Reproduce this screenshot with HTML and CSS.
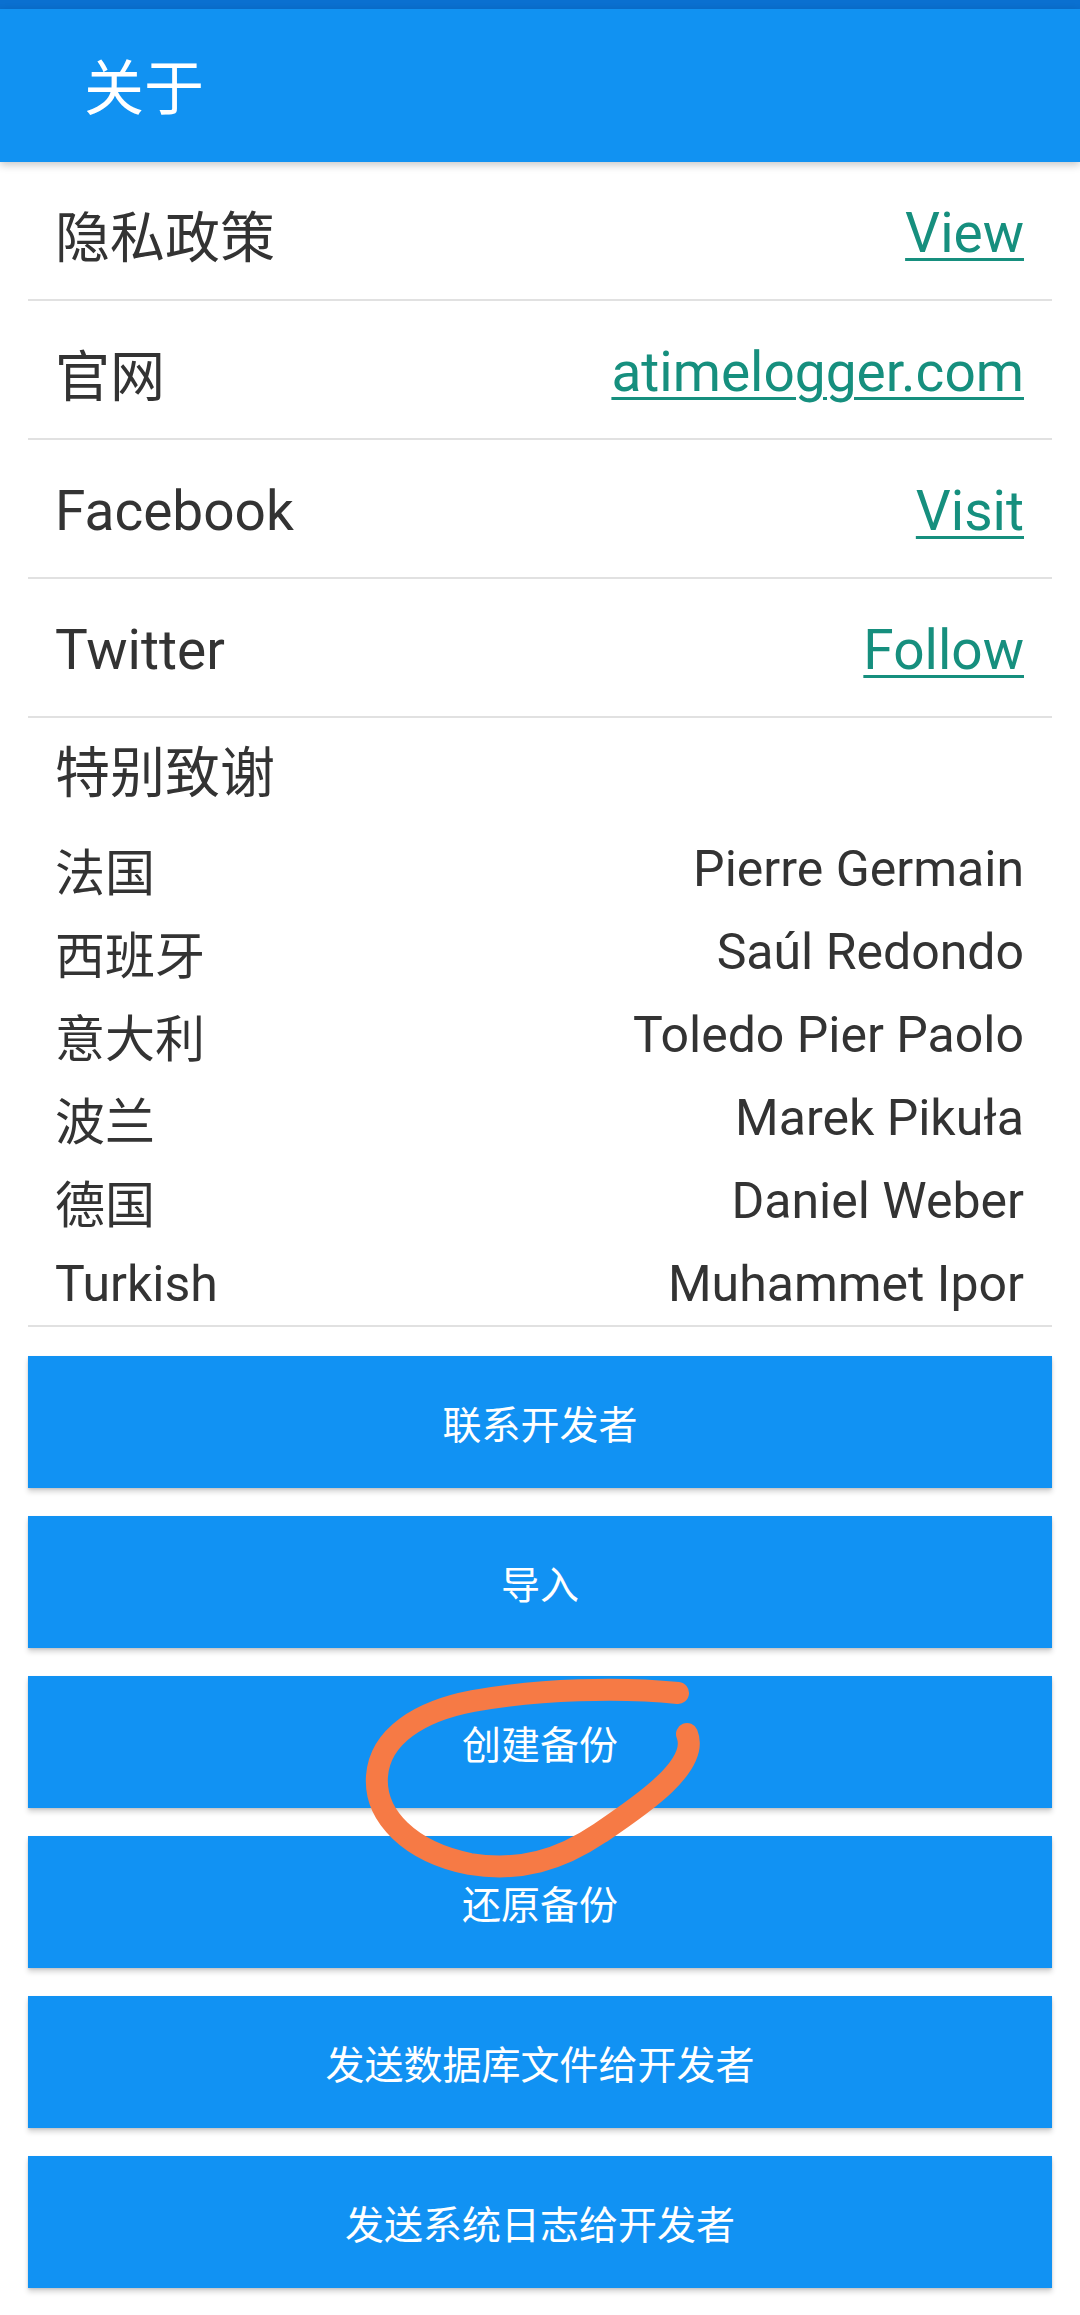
FILE: index.html
```html
<!DOCTYPE html>
<html lang="zh">
<head>
<meta charset="utf-8">
<title>关于</title>
<link rel="stylesheet" href="styles.css">
</head>
<body>
<div class="page">
  <div class="statusbar"></div>
  <header class="appbar"><h1 class="title">关于</h1></header>

  <main class="content">
    <div class="row">
      <span class="label">隐私政策</span>
      <a class="link">View</a>
    </div>
    <div class="row">
      <span class="label">官网</span>
      <a class="link">atimelogger.com</a>
    </div>
    <div class="row">
      <span class="label">Facebook</span>
      <a class="link">Visit</a>
    </div>
    <div class="row">
      <span class="label">Twitter</span>
      <a class="link">Follow</a>
    </div>

    <section class="thanks">
      <div class="thanks-title">特别致谢</div>
      <div class="thanks-list">
        <div class="thanks-row"><span>法国</span><span>Pierre Germain</span></div>
        <div class="thanks-row"><span>西班牙</span><span>Saúl Redondo</span></div>
        <div class="thanks-row"><span>意大利</span><span>Toledo Pier Paolo</span></div>
        <div class="thanks-row"><span>波兰</span><span>Marek Pikuła</span></div>
        <div class="thanks-row"><span>德国</span><span>Daniel Weber</span></div>
        <div class="thanks-row"><span>Turkish</span><span>Muhammet Ipor</span></div>
      </div>
    </section>

    <div class="buttons">
      <button class="btn">联系开发者</button>
      <button class="btn">导入</button>
      <button class="btn">创建备份</button>
      <button class="btn">还原备份</button>
      <button class="btn">发送数据库文件给开发者</button>
      <button class="btn">发送系统日志给开发者</button>
    </div>
  </main>

  <svg class="annotation" width="1080" height="2315" viewBox="0 0 1080 2315" aria-hidden="true">
    <path d="M 678 1693 C 620 1687, 540 1689, 473 1701 C 420 1711, 380 1736, 377 1776 C 374 1816, 410 1852, 470 1864 C 520 1872, 560 1860, 600 1833 C 640 1806, 700 1766, 687 1734" fill="none" stroke="#f67a45" stroke-width="22" stroke-linecap="round" stroke-linejoin="round"/>
  </svg>
</div>
</body>
</html>
```

FILE: styles.css
```css
* { box-sizing: border-box; }

html, body {
  margin: 0;
  padding: 0;
  background: #ffffff;
}

body {
  font-family: Roboto, "Noto Sans CJK SC", "Noto Sans", sans-serif;
  color: #333333;
}

.page {
  position: relative;
  width: 1080px;
  min-height: 2315px;
  overflow: hidden;
}

.statusbar {
  height: 9px;
  background: #0a70d0;
}

.appbar {
  position: relative;
  z-index: 2;
  height: 153px;
  background: #1192f2;
  display: flex;
  align-items: center;
  padding-left: 84px;
  box-shadow: 0 3px 8px rgba(0, 0, 0, 0.22);
}

.title {
  margin: 0;
  font-family: "Noto Sans CJK SC", Roboto, sans-serif;
  font-weight: 400;
  font-size: 60px;
  line-height: 1;
  color: #ffffff;
  padding-bottom: 4px;
}

.content {
  margin: 0 28px;
}

.row {
  height: 139px;
  display: flex;
  align-items: center;
  justify-content: space-between;
  padding: 4px 28px 0 27px;
  border-bottom: 2px solid #e1e1e1;
  font-size: 55px;
}

.label {
  color: #333333;
}

.link {
  color: #168f7e;
  text-decoration: underline;
  text-decoration-thickness: 3px;
  text-underline-offset: 6px;
}

.thanks {
  border-bottom: 2px solid #e1e1e1;
  padding: 18px 28px 0 27px;
}

.thanks-title {
  font-size: 55px;
  line-height: 74px;
  margin-bottom: 17px;
}

.thanks-row {
  height: 83px;
  display: flex;
  align-items: center;
  justify-content: space-between;
  font-size: 50px;
  color: #333333;
}

.buttons {
  display: flex;
  flex-direction: column;
  gap: 28px;
  padding-top: 29px;
}

.btn {
  height: 132px;
  width: 100%;
  border: 0;
  border-radius: 0;
  background: #1192f3;
  color: #ffffff;
  font-family: "Noto Sans CJK SC", Roboto, sans-serif;
  font-size: 39px;
  font-weight: 400;
  box-shadow: 0 4px 5px rgba(0, 0, 0, 0.16), 0 1px 2px rgba(0, 0, 0, 0.12);
  padding: 0;
}

.annotation {
  position: absolute;
  left: 0;
  top: 0;
  z-index: 5;
  pointer-events: none;
}
```
